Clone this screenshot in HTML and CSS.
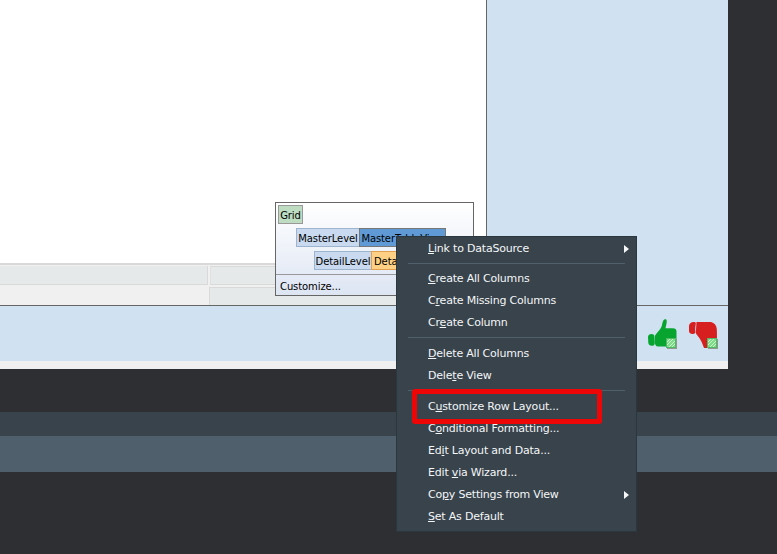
FILE: index.html
```html
<!DOCTYPE html>
<html lang="en">
<head>
<meta charset="utf-8">
<title>Grid designer</title>
<link rel="stylesheet" href="styles.css">
</head>
<body>
<div class="window">
  <div class="top">
    <div class="canvas">
      <div class="blank"></div>
      <div class="grid-strip">
        <div class="strip-row first">
          <div class="cell wide"></div>
          <div class="cell rest"></div>
        </div>
        <div class="strip-row second">
          <div class="spacer"></div>
          <div class="cell rest open"></div>
        </div>
      </div>
    </div>
    <div class="side"></div>
  </div>
  <div class="bottom">
    <svg class="thumb up" width="29" height="30" viewBox="0 0 29 30">
      <path d="M0 18c0-2 1.500-3 3.500-3 2 0 3 1 3 3l0.300 6c0 2-1.300 2.800-3 2.800-2 0-3.300-1-3.500-3z" fill="#07a52f"/>
      <path d="M7 16.500c2.500-3.500 5.500-6 6.800-9.500 0.500-2 0.500-3.500 1.500-5.500 1-1.500 3.200-2 3.400 0 0.200 2.500-0.700 5.300-1.200 7.800h7.500c2 0 3.500 1.200 3.500 3.200v10l-9 5h-9.500c-2 0-2.500-1-3-3z" fill="#07a52f"/>
      <rect x="19" y="20" width="10" height="10" fill="#8f9a8f"/>
      <rect x="18" y="19" width="10" height="10" fill="#7edb8a"/>
      <path d="M18 21l2-2M18 24l5-5M18 27l8-8M20 29l8-8M23 29l5-5M26 29l2-2" stroke="#c8f7c8" stroke-width="1"/>
      <rect x="18.500" y="19.500" width="9" height="9" fill="none" stroke="#4fb765" stroke-width="1"/>
    </svg>
    <svg class="thumb down" width="29" height="27" viewBox="0 0 29 27">
      <path d="M0 4c0-2 2-4 4.500-4 1.800 0 2.700 0.500 2.300 2-0.500 2.500-0.800 5-0.500 8 0 1.500-1.300 2-2.800 2-2 0-3.500-1-3.500-3z" fill="#d81f1f"/>
      <path d="M7.500 0h13c4 0 6.500 2.500 7 5.500 0.500 2 0.500 5 0.500 12l-10 8.500h-3c-1.500-4.500-3.500-9-7-13-1.500-1.500-1.500-3-1-5z" fill="#d81f1f"/>
      <rect x="19" y="17" width="10" height="10" fill="#8f9a8f"/>
      <rect x="18" y="16" width="10" height="10" fill="#7edb8a"/>
      <path d="M18 18l2-2M18 21l5-5M18 24l8-8M20 26l8-8M23 26l5-5M26 26l2-2" stroke="#c8f7c8" stroke-width="1"/>
      <rect x="18.500" y="16.500" width="9" height="9" fill="none" stroke="#4fb765" stroke-width="1"/>
    </svg>
  </div>
  <div class="footer"></div>
</div>
<div class="bands">
  <div class="band-dark"></div>
  <div class="band-light"></div>
</div>

<div class="levels">
  <div class="level-row"><span class="tag tag-grid">Grid</span></div>
  <div class="level-row indent1"><span class="tag tag-level tag-master">MasterLevel</span><span class="tag tag-view">MasterTableView</span></div>
  <div class="level-row indent2"><span class="tag tag-level tag-detail">DetailLevel</span><span class="tag tag-detail-view">DetailTableView</span></div>
  <div class="customize">Customize...</div>
</div>

<div class="menu">
  <div class="item has-sub"><span><u>L</u>ink to DataSource</span></div>
  <div class="sep sep-first"></div>
  <div class="item"><span><u>C</u>reate All Columns</span></div>
  <div class="item"><span>C<u>r</u>eate Missing Columns</span></div>
  <div class="item"><span>Cr<u>e</u>ate Column</span></div>
  <div class="sep"></div>
  <div class="item"><span><u>D</u>elete All Columns</span></div>
  <div class="item"><span>Dele<u>t</u>e View</span></div>
  <div class="sep"></div>
  <div class="item"><span>C<u>u</u>stomize Row Layout...</span></div>
  <div class="item"><span>C<u>o</u>nditional Formatting...</span></div>
  <div class="item"><span>Ed<u>i</u>t Layout and Data...</span></div>
  <div class="item"><span>Edit <u>v</u>ia Wizard...</span></div>
  <div class="item has-sub"><span>Co<u>p</u>y Settings from View</span></div>
  <div class="item"><span><u>S</u>et As Default</span></div>
</div>
<div class="highlight"></div>
</body>
</html>
```
FILE: styles.css
```css
* { box-sizing: border-box; }
html, body { margin: 0; height: 100%; }
body {
  width: 777px;
  height: 554px;
  overflow: hidden;
  position: relative;
  background: #2e2f33;
  font-family: "DejaVu Sans", sans-serif;
}
.window { width: 728px; height: 369px; display: flex; flex-direction: column; background: #f0f0f0; }
.top { height: 306px; display: flex; border-bottom: 1px solid #666; }
.canvas { flex: 1; display: flex; flex-direction: column; background: #fff; }
.blank { flex: 1; }
.grid-strip { height: 42px; background: #f0f0f0; border-top: 2px solid #d9d9d9; padding-top: 1px; }
.strip-row { display: flex; }
.strip-row.first { height: 19px; gap: 2px; }
.strip-row.second { height: 18px; margin-top: 2px; }
.cell { background: #e5e9e9; border: 1px solid #d9d9d9; border-left: 0; border-top: 0; }
.cell.wide { width: 208px; }
.cell.rest { flex: 1; border-left: 1px solid #d9d9d9; border-top: 1px solid #d9d9d9; border-bottom: 1px solid #d9d9d9; }
.first .rest { border-left: 1px solid #e0e0e0; }
.spacer { width: 209px; }
.cell.open { border-bottom: 0; }
.side { width: 242px; background: #d0e2f1; border-left: 1px solid #666; }
.bottom { height: 55px; background: #d0e2f1; display: flex; align-items: flex-end; gap: 12px; padding: 0 10px 12px 0; justify-content: flex-end; }
.thumb { display: block; flex: none; }
.footer { height: 8px; background: #f0f0f0; }
.bands { margin-top: 43px; }
.band-dark { height: 24px; background: #38434c; }
.band-light { height: 36px; background: #4f5f6c; }

.levels {
  position: absolute; left: 275px; top: 202px; width: 199px; height: 94px;
  border: 1px solid #666;
  background: linear-gradient(#ffffff, #dde5f3);
  padding: 2px 2px 0;
  font-size: 10px; letter-spacing: -0.1px; color: #000;
}
.level-row { display: flex; height: 19px; margin-bottom: 4px; white-space: nowrap; }
.indent1 { padding-left: 18px; }
.indent2 { padding-left: 36px; }
.tag { display: flex; align-items: center; justify-content: center; height: 19px; padding-top: 1px; border: 1px solid #999; }
.tag-grid { width: 25px; background: #bddcc1; }
.tag-level { background: #c9daf0; border-color: #9db4cf; border-right: 0; }
.tag-master { width: 63px; }
.tag-detail { width: 57px; }
.tag-view { width: 87px; background: #5f9ad6; border-color: #777; }
.tag-detail-view { width: 87px; background: #fdd086; border-color: #e0a050; justify-content: flex-start; padding-left: 2px; }
.customize { margin: 0 -2px; padding: 3px 4px 0; border-top: 1px solid #999; height: 22px; line-height: 17px; }

.menu {
  position: absolute; left: 396px; top: 236px; width: 241px; height: 296px;
  background: #38434c; border: 1px solid #2b3740;
  padding-top: 1px; color: #f4f6f7; font-size: 11px; letter-spacing: -0.2px;
}
.item { height: 22px; line-height: 22px; padding-left: 31px; position: relative; white-space: nowrap; }
.item u { text-underline-offset: 1px; }
.has-sub::after {
  content: ""; position: absolute; right: 7px; top: 7px;
  border-left: 5px solid #f4f6f7; border-top: 4px solid transparent; border-bottom: 4px solid transparent;
}
.sep { height: 9px; background: linear-gradient(#4f5f6c, #4f5f6c) no-repeat 11px 3px / 217px 1px; }
.sep-first { height: 8px; }
.highlight {
  position: absolute; left: 412px; top: 389px; width: 190px; height: 35px;
  border: 5px solid #ee0505; border-radius: 3px;
}
```
